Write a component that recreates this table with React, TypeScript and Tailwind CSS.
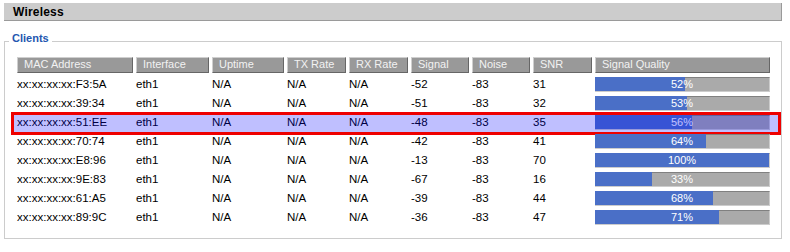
import React from "react";

type Client = {
  mac: string;
  iface: string;
  uptime: string;
  tx: string;
  rx: string;
  signal: number;
  noise: number;
  snr: number;
  quality: number;
  selected?: boolean;
};

const clients: Client[] = [
  { mac: "xx:xx:xx:xx:F3:5A", iface: "eth1", uptime: "N/A", tx: "N/A", rx: "N/A", signal: -52, noise: -83, snr: 31, quality: 52 },
  { mac: "xx:xx:xx:xx:39:34", iface: "eth1", uptime: "N/A", tx: "N/A", rx: "N/A", signal: -51, noise: -83, snr: 32, quality: 53 },
  { mac: "xx:xx:xx:xx:51:EE", iface: "eth1", uptime: "N/A", tx: "N/A", rx: "N/A", signal: -48, noise: -83, snr: 35, quality: 56, selected: true },
  { mac: "xx:xx:xx:xx:70:74", iface: "eth1", uptime: "N/A", tx: "N/A", rx: "N/A", signal: -42, noise: -83, snr: 41, quality: 64 },
  { mac: "xx:xx:xx:xx:E8:96", iface: "eth1", uptime: "N/A", tx: "N/A", rx: "N/A", signal: -13, noise: -83, snr: 70, quality: 100 },
  { mac: "xx:xx:xx:xx:9E:83", iface: "eth1", uptime: "N/A", tx: "N/A", rx: "N/A", signal: -67, noise: -83, snr: 16, quality: 33 },
  { mac: "xx:xx:xx:xx:61:A5", iface: "eth1", uptime: "N/A", tx: "N/A", rx: "N/A", signal: -39, noise: -83, snr: 44, quality: 68 },
  { mac: "xx:xx:xx:xx:89:9C", iface: "eth1", uptime: "N/A", tx: "N/A", rx: "N/A", signal: -36, noise: -83, snr: 47, quality: 71 },
];

const headers = ["MAC Address", "Interface", "Uptime", "TX Rate", "RX Rate", "Signal", "Noise", "SNR", "Signal Quality"];

const cols = "grid grid-cols-[116px_73px_72px_59px_59px_58px_58px_59px_175px] gap-x-[3px]";

function QualityBar({ value }: { value: number }) {
  return (
    <div className="relative h-[15px] bg-[#aaaaaa] border-t border-t-[#808080] border-r border-b border-r-[#cccccc] border-b-[#cccccc]">
      <div className="absolute left-0 -top-px bottom-0 bg-[#4a6fc7]" style={{ width: `${value}%` }} />
      <div className="relative flex h-full items-center justify-center text-[11px] leading-none text-white">{value}%</div>
    </div>
  );
}

export default function App() {
  return (
    <div className="w-[790px] h-[252px] bg-white px-[4px] pt-[3px] font-['Liberation_Sans',Arial,sans-serif] text-black">
      <div className="h-[18px] w-[778px] bg-[#cccccc] border-b border-r border-[#9a9a9a] flex items-center pl-[9px]">
        <span className="text-[12px] font-bold tracking-[0.2px] leading-none">Wireless</span>
      </div>

      <fieldset className="mt-[10px] w-[778px] border border-[#cccccc] p-0">
        <legend className="ml-[4px] px-[3px] pt-[1px] pb-[7px] text-[11px] font-bold leading-[13px] text-[#2457b0]">Clients</legend>
        <div className="pl-[12px] pr-[10px] pt-[5px] pb-[11px]">
          <div className={`${cols} mb-[2px]`}>
            {headers.map((h) => (
              <div
                key={h}
                className="h-[16px] bg-[#999999] border border-t-[#cfcfcf] border-l-[#cfcfcf] border-b-[#666666] border-r-[#666666] pl-[6px] pb-[2px] flex items-center text-[11px] leading-none text-[#f2f2f2] whitespace-nowrap"
              >
                {h}
              </div>
            ))}
          </div>

          {clients.map((c) => (
            <div key={c.mac} className={`relative ${cols} h-[19px] items-center text-[11.5px] leading-none`}>
              <div>{c.mac}</div>
              <div>{c.iface}</div>
              <div>{c.uptime}</div>
              <div>{c.tx}</div>
              <div>{c.rx}</div>
              <div>{c.signal}</div>
              <div>{c.noise}</div>
              <div>{c.snr}</div>
              <QualityBar value={c.quality} />
              {c.selected ? (
                <div className="absolute -top-[1px] -bottom-[3px] -left-[6px] -right-[10px] border-[3px] border-[#ee0000] bg-[rgba(0,0,255,0.25)] pointer-events-none" />
              ) : null}
            </div>
          ))}
        </div>
      </fieldset>
    </div>
  );
}
